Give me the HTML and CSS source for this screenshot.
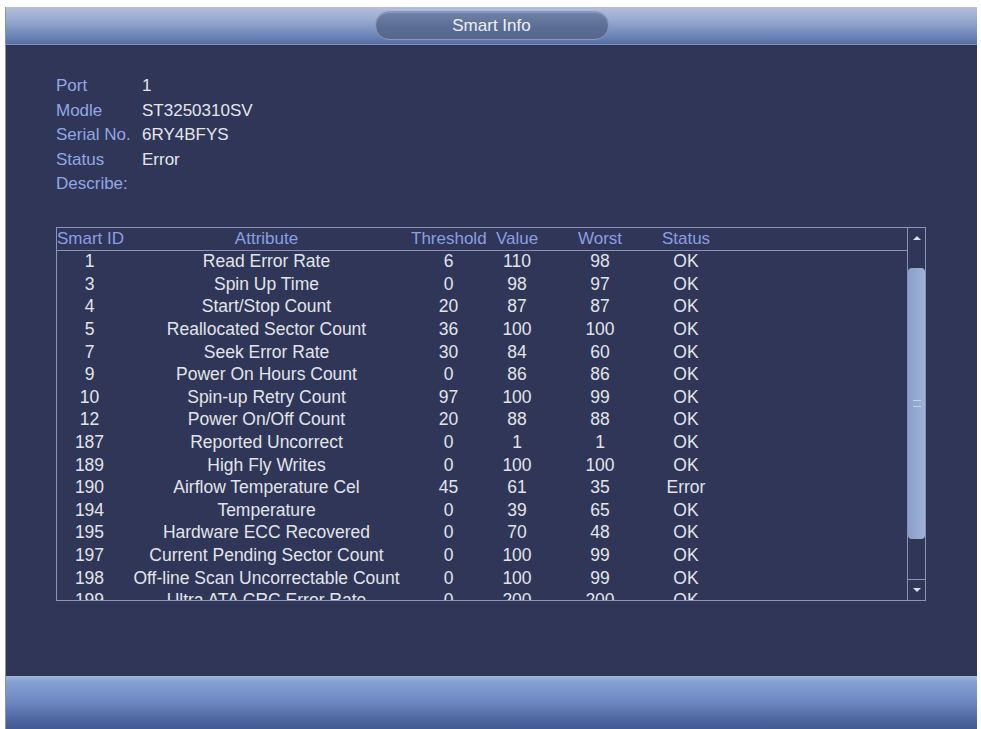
FILE: index.html
```html
<!DOCTYPE html>
<html lang="en">
<head>
    <meta charset="UTF-8">
    <title>Smart Info</title>
    <link rel="stylesheet" href="styles.css">
</head>
<body>
    <div class="window">
        <div class="titlebar">
            <div class="title-pill">Smart Info</div>
        </div>

        <div class="content">
            <div class="info">
                <div class="info-row"><span class="label">Port</span><span class="value">1</span></div>
                <div class="info-row"><span class="label">Modle</span><span class="value">ST3250310SV</span></div>
                <div class="info-row"><span class="label">Serial No.</span><span class="value">6RY4BFYS</span></div>
                <div class="info-row"><span class="label">Status</span><span class="value">Error</span></div>
                <div class="info-row"><span class="label">Describe:</span></div>
            </div>

            <div class="table-box">
                <div class="table">
                    <div class="row head">
                        <span>Smart ID</span><span>Attribute</span><span>Threshold</span><span>Value</span><span>Worst</span><span>Status</span><span></span>
                    </div>
                    <div class="rows">
                        <div class="row"><span>1</span><span>Read Error Rate</span><span>6</span><span>110</span><span>98</span><span>OK</span><span></span></div>
                        <div class="row"><span>3</span><span>Spin Up Time</span><span>0</span><span>98</span><span>97</span><span>OK</span><span></span></div>
                        <div class="row"><span>4</span><span>Start/Stop Count</span><span>20</span><span>87</span><span>87</span><span>OK</span><span></span></div>
                        <div class="row"><span>5</span><span>Reallocated Sector Count</span><span>36</span><span>100</span><span>100</span><span>OK</span><span></span></div>
                        <div class="row"><span>7</span><span>Seek Error Rate</span><span>30</span><span>84</span><span>60</span><span>OK</span><span></span></div>
                        <div class="row"><span>9</span><span>Power On Hours Count</span><span>0</span><span>86</span><span>86</span><span>OK</span><span></span></div>
                        <div class="row"><span>10</span><span>Spin-up Retry Count</span><span>97</span><span>100</span><span>99</span><span>OK</span><span></span></div>
                        <div class="row"><span>12</span><span>Power On/Off Count</span><span>20</span><span>88</span><span>88</span><span>OK</span><span></span></div>
                        <div class="row"><span>187</span><span>Reported Uncorrect</span><span>0</span><span>1</span><span>1</span><span>OK</span><span></span></div>
                        <div class="row"><span>189</span><span>High Fly Writes</span><span>0</span><span>100</span><span>100</span><span>OK</span><span></span></div>
                        <div class="row"><span>190</span><span>Airflow Temperature Cel</span><span>45</span><span>61</span><span>35</span><span>Error</span><span></span></div>
                        <div class="row"><span>194</span><span>Temperature</span><span>0</span><span>39</span><span>65</span><span>OK</span><span></span></div>
                        <div class="row"><span>195</span><span>Hardware ECC Recovered</span><span>0</span><span>70</span><span>48</span><span>OK</span><span></span></div>
                        <div class="row"><span>197</span><span>Current Pending Sector Count</span><span>0</span><span>100</span><span>99</span><span>OK</span><span></span></div>
                        <div class="row"><span>198</span><span>Off-line Scan Uncorrectable Count</span><span>0</span><span>100</span><span>99</span><span>OK</span><span></span></div>
                        <div class="row"><span>199</span><span>Ultra ATA CRC Error Rate</span><span>0</span><span>200</span><span>200</span><span>OK</span><span></span></div>
                    </div>
                </div>

                <div class="scrollbar">
                    <div class="sb-btn up"></div>
                    <div class="sb-track">
                        <div class="sb-thumb"><span class="grip"></span></div>
                    </div>
                    <div class="sb-btn down"></div>
                </div>
            </div>
        </div>

        <div class="footer"></div>
    </div>
</body>
</html>
```

FILE: styles.css
```css
body {
    margin: 0;
    padding: 0;
    background-color: #ffffff;
    font-family: "Liberation Sans", Arial, sans-serif;
}
.window {
    margin: 7px 4px 0 5px;
    height: 722px;
    display: flex;
    flex-direction: column;
    border-left: 1px solid #8d93a3;
}
.titlebar {
    height: 37px;
    display: flex;
    justify-content: center;
    align-items: center;
    background: linear-gradient(#b4c0da, #98aad0 35%, #6a83b8 80%, #566da2);
    border-bottom: 1px solid #7f8fb4;
}
.title-pill {
    width: 232px;
    height: 27px;
    border-radius: 14px;
    background: linear-gradient(#7182a8, #5b6c94 60%, #56678f);
    border: 1px solid #8997b9;
    box-shadow: inset 0 1px 1px rgba(255, 255, 255, 0.2);
    color: #edeff5;
    font-size: 17px;
    display: flex;
    justify-content: center;
    align-items: center;
}
.content {
    flex: 1;
    background-color: #2f3658;
    padding: 29px 51px 0 50px;
}
.info-row {
    height: 24.5px;
    display: flex;
    align-items: center;
    font-size: 17px;
}
.label {
    width: 86px;
    color: #93a6e4;
}
.value {
    color: #e4e5ec;
}
.table-box {
    margin-top: 30px;
    height: 372px;
    border: 1px solid #8a94b6;
    display: flex;
}
.table {
    flex: 1;
    overflow: hidden;
    display: flex;
    flex-direction: column;
}
.row {
    display: grid;
    grid-template-columns: 65px 289px 75px 62px 104px 68px 1fr;
    height: 22.6px;
    align-items: center;
    text-align: center;
    font-size: 17.5px;
    color: #e2e4ea;
    white-space: nowrap;
}
.row.head {
    flex: none;
    height: 22px;
    font-size: 17px;
    color: #8c9ee2;
    border-bottom: 1px solid #8a94b6;
}
.rows {
    flex: 1;
    overflow: hidden;
}
.scrollbar {
    width: 17px;
    border-left: 1px solid #8a94b6;
    display: flex;
    flex-direction: column;
}
.sb-btn {
    height: 20px;
    display: flex;
    justify-content: center;
    align-items: center;
}
.sb-btn::after {
    content: "";
    border-left: 4px solid transparent;
    border-right: 4px solid transparent;
}
.sb-btn.up::after {
    border-bottom: 4px solid #d9deea;
}
.sb-btn.down {
    border-top: 1px solid #8a94b6;
}
.sb-btn.down::after {
    border-top: 4px solid #d9deea;
}
.sb-track {
    flex: 1;
    padding: 20px 0 40px;
}
.sb-thumb {
    height: 100%;
    border-radius: 4px;
    background: linear-gradient(90deg, #8a9fc9, #a0b2d8);
    display: flex;
    justify-content: center;
    align-items: center;
}
.grip {
    width: 8px;
    height: 5px;
    border-top: 1px solid #c8d3ea;
    border-bottom: 1px solid #c8d3ea;
}
.footer {
    height: 53px;
    background: linear-gradient(#a3b6dc, #86a1d3 10%, #6f8bc4 45%, #4f68a3 80%, #435a93);
}
```
